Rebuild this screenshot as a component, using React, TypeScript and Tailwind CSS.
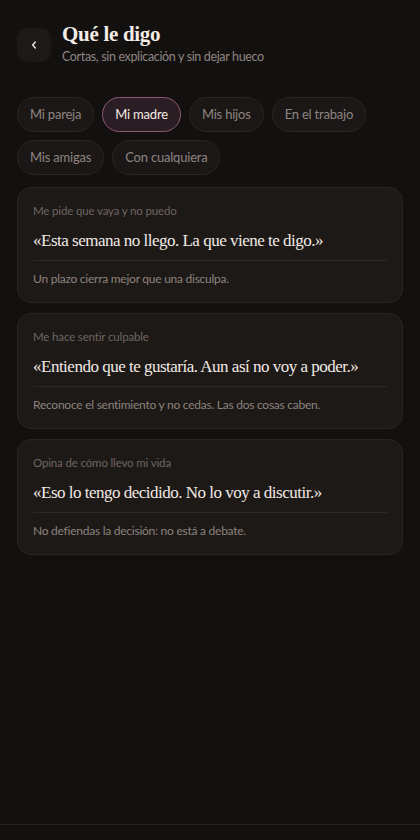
import React from "react";

const chips = [
  { label: "Mi pareja", active: false },
  { label: "Mi madre", active: true },
  { label: "Mis hijos", active: false },
  { label: "En el trabajo", active: false },
  { label: "Mis amigas", active: false },
  { label: "Con cualquiera", active: false },
];

const cards = [
  {
    label: "Me pide que vaya y no puedo",
    quote: "«Esta semana no llego. La que viene te digo.»",
    note: "Un plazo cierra mejor que una disculpa.",
  },
  {
    label: "Me hace sentir culpable",
    quote: "«Entiendo que te gustaría. Aun así no voy a poder.»",
    note: "Reconoce el sentimiento y no cedas. Las dos cosas caben.",
  },
  {
    label: "Opina de cómo llevo mi vida",
    quote: "«Eso lo tengo decidido. No lo voy a discutir.»",
    note: "No defiendas la decisión: no está a debate.",
  },
];

export default function App() {
  return (
    <div
      className="flex h-[840px] w-full flex-col bg-[#131010] text-[#ece4de]"
      style={{ fontFamily: "Lato, 'Noto Sans', sans-serif" }}
    >
      <div className="flex-1 px-[17px]">
        <header className="flex items-start gap-[11px] pt-[28px]">
          <button className="flex h-[34px] w-[34px] shrink-0 items-center justify-center rounded-[10px] bg-[#1d1917]">
            <svg width="8" height="10" viewBox="0 0 8 10" fill="none">
              <path d="M5.3 2 L2.7 5 L5.3 8" stroke="#e8e0da" strokeWidth="1.5" strokeLinecap="round" strokeLinejoin="round" />
            </svg>
          </button>
          <div className="-mt-[9px] flex flex-col">
            <h1
              className="text-[21px] font-bold leading-[30px] tracking-[-0.3px] text-[#f3ebe4]"
              style={{ fontFamily: "'Liberation Serif', 'DejaVu Serif', serif" }}
            >
              Qué le digo
            </h1>
            <p className="text-[12.5px] leading-[16px] tracking-[-0.35px] text-[#8f8580]">
              Cortas, sin explicación y sin dejar hueco
            </p>
          </div>
        </header>

        <div className="mt-[32px] flex flex-wrap gap-x-[8px] gap-y-[8px]">
          {chips.map((c) =>
            c.active ? (
              <span
                key={c.label}
                className="flex h-[35px] items-center rounded-full border border-[#8e5a74] bg-[#2a1d24] px-[12px] text-[13px] tracking-[-0.2px] text-[#f3ebe4]"
              >
                {c.label}
              </span>
            ) : (
              <span
                key={c.label}
                className="flex h-[35px] items-center rounded-full border border-[#2c2523] bg-[#1b1716] px-[12px] text-[13px] tracking-[-0.2px] text-[#8e8581]"
              >
                {c.label}
              </span>
            )
          )}
        </div>

        <div className="mt-[12px] flex flex-col gap-[10px]">
          {cards.map((c) => (
            <div
              key={c.label}
              className="rounded-[14px] border border-[#2c2523] bg-[#1d1917] px-[15px] pb-[15px] pt-[15px]"
            >
              <div className="text-[11.5px] leading-[16px] tracking-[-0.15px] text-[#6e6561]">{c.label}</div>
              <div
                className="mt-[10px] border-b border-[#2e2725] pb-[7px] text-[17px] leading-[24px] tracking-[-0.5px] text-[#f1e9e3]"
                style={{ fontFamily: "'Liberation Serif', 'DejaVu Serif', serif" }}
              >
                {c.quote}
              </div>
              <div className="pt-[9px] text-[12px] leading-[17px] tracking-[-0.25px] text-[#8c837e]">{c.note}</div>
            </div>
          ))}
        </div>
      </div>
      <div className="h-[16px] border-t border-[#2a2022]" />
    </div>
  );
}
